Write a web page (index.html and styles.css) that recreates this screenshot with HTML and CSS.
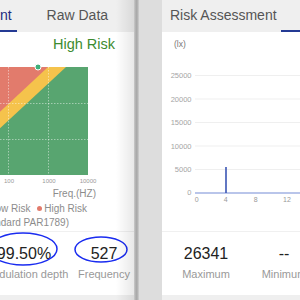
FILE: index.html
```html
<!DOCTYPE html>
<html lang="en">
<head>
    <meta charset="UTF-8">
    <meta name="viewport" content="width=device-width, initial-scale=1.0">
    <title>Flicker Report</title>
    <link rel="stylesheet" href="styles.css">
</head>
<body>
    <div class="screen">
        <section class="panel panel-left">
            <div class="page page-shifted">
                <div class="tabs">
                    <div class="tab active">Risk Assessment</div>
                    <div class="tab tab-raw">Raw Data</div>
                </div>
                <div class="page-body">
                    <div class="risk-level">High Risk</div>
                    <svg class="risk-chart" width="180" height="123" viewBox="0 -5 180 123">
                        <rect x="0" y="0" width="160" height="108" fill="#58a570"/>
                        <polygon points="0,0 138,0 21.6,108 0,108" fill="#f5c34c"/>
                        <polygon points="0,0 120,0 4.3,108 0,108" fill="#e27b6c"/>
                        <g stroke="rgba(255,255,255,0.45)" stroke-width="1" stroke-dasharray="1.5 1.5">
                            <line x1="40.5" y1="0" x2="40.5" y2="108"/>
                            <line x1="80.5" y1="0" x2="80.5" y2="108"/>
                            <line x1="120.5" y1="0" x2="120.5" y2="108"/>
                            <line x1="0" y1="36.5" x2="160" y2="36.5"/>
                            <line x1="0" y1="72.5" x2="160" y2="72.5"/>
                        </g>
                        <circle cx="110" cy="0" r="3" fill="#3fb07c" stroke="#fff" stroke-width="1"/>
                        <g class="tick" text-anchor="middle">
                            <text x="41" y="116">10</text>
                            <text x="81" y="116">100</text>
                            <text x="121" y="116">1000</text>
                            <text x="160" y="116">10000</text>
                        </g>
                    </svg>
                    <div class="axis-title">Freq.(HZ)</div>
                    <div class="legend">
                        <span class="dot dot-green"></span>No Risk
                        <span class="dot dot-yellow"></span>Low Risk
                        <span class="dot dot-red"></span>High Risk
                    </div>
                    <div class="standard">(IEEE Standard PAR1789)</div>
                    <div class="stats stats-left">
                        <div class="stat">
                            <div class="stat-value">99.50%</div>
                            <div class="stat-label">Modulation depth</div>
                        </div>
                        <div class="stat">
                            <div class="stat-value">527</div>
                            <div class="stat-label">Frequency</div>
                        </div>
                    </div>
                </div>
            </div>
            <!-- hand-drawn marks over the values -->
            <svg class="marks" width="134" height="300">
                <ellipse cx="23" cy="249" rx="34" ry="16" fill="none" stroke="#1a2cf0" stroke-width="1.5"/>
                <ellipse cx="101" cy="249.5" rx="26" ry="12.5" fill="none" stroke="#1a2cf0" stroke-width="1.5"/>
            </svg>
            <div class="edge-shade"></div>
        </section>

        <div class="divider"></div>

        <section class="panel panel-right">
            <div class="page">
                <div class="tabs">
                    <div class="tab tab-first">Risk Assessment</div>
                    <div class="tab active tab-next">Raw Data</div>
                </div>
                <div class="page-body">
                    <div class="unit">(lx)</div>
                    <svg class="lux-chart" width="200" height="150" viewBox="0 0 200 150">
                        <g stroke="#efefef" stroke-width="1">
                            <line x1="33" y1="15.5" x2="200" y2="15.5"/>
                            <line x1="33" y1="39" x2="200" y2="39"/>
                            <line x1="33" y1="62.5" x2="200" y2="62.5"/>
                            <line x1="33" y1="86" x2="200" y2="86"/>
                            <line x1="33" y1="109.5" x2="200" y2="109.5"/>
                        </g>
                        <line x1="33" y1="133" x2="200" y2="133" stroke="#b9c5ea" stroke-width="2"/>
                        <line x1="64" y1="107" x2="64" y2="133" stroke="#3a55b4" stroke-width="1.6"/>
                        <g class="tick tick-y" text-anchor="end">
                            <text x="29.5" y="17.7">25000</text>
                            <text x="29.5" y="41.7">20000</text>
                            <text x="29.5" y="64.7">15000</text>
                            <text x="29.5" y="88.7">10000</text>
                            <text x="29.5" y="111.7">5000</text>
                            <text x="29.5" y="134.7">0</text>
                        </g>
                        <g class="tick tick-x" text-anchor="middle">
                            <text x="34.7" y="141.5">0</text>
                            <text x="63.7" y="141.5">4</text>
                            <text x="93.7" y="141.5">8</text>
                            <text x="125" y="141.5">12</text>
                        </g>
                    </svg>
                    <div class="stats stats-right">
                        <div class="stat">
                            <div class="stat-value">26341</div>
                            <div class="stat-label">Maximum</div>
                        </div>
                        <div class="stat">
                            <div class="stat-value">--</div>
                            <div class="stat-label">Minimum</div>
                        </div>
                        <div class="stat">
                            <div class="stat-value">--</div>
                            <div class="stat-label">Average</div>
                        </div>
                    </div>
                </div>
            </div>
        </section>
    </div>
</body>
</html>
```

FILE: styles.css
```css
body {
    margin: 0;
    width: 300px;
    height: 300px;
    overflow: hidden;
    background: #dddddd;
    font-family: 'Liberation Sans', Arial, sans-serif;
    color: #222;
}

.screen {
    display: flex;
    width: 300px;
    height: 300px;
}

.panel {
    position: relative;
    height: 300px;
    overflow: hidden;
    background: #efefef;
    flex-shrink: 0;
}

.panel-left {
    width: 134px;
}

.panel-right {
    margin-left: 23px;
    flex: 1;
}

.page {
    width: 250px;
}

.page-shifted {
    margin-left: -100px;
}

/* Tab bar */
.tabs {
    display: flex;
    height: 32px;
    background: #efefef;
}

.tab {
    font-size: 14px;
    line-height: 30px;
    color: #555;
    white-space: nowrap;
    padding: 0 5px;
    border-bottom: 2px solid transparent;
}

.tab.active {
    border-bottom-color: #243a94;
}

.panel-left .tab.active {
    color: #1d2c80;
}

.tab-raw {
    margin-left: 25px;
}

.tab-first {
    padding: 0 4px 0 8px;
}

.tab-next {
    padding-left: 20px;
}

.page-body {
    height: 263px;
    background: #fff;
}

/* Left page */
.risk-level {
    width: 215px;
    text-align: right;
    font-size: 14.5px;
    line-height: 20px;
    padding-top: 2px;
    color: #3d8b2f;
}

.risk-chart {
    display: block;
    margin: 8px 0 0 28px;
    overflow: visible;
}

.tick {
    font-family: 'Liberation Sans', Arial, sans-serif;
    font-size: 6px;
    fill: #9a9a9a;
}

.axis-title,
.legend,
.standard {
    font-size: 10px;
    line-height: 14px;
    color: #8c8c8c;
    text-align: right;
    white-space: nowrap;
}

.axis-title {
    width: 196px;
    margin-top: 2px;
}

.legend {
    width: 187px;
    margin-top: 1px;
}

.standard {
    width: 169px;
}

.dot {
    display: inline-block;
    width: 5px;
    height: 5px;
    border-radius: 50%;
    margin: 0 2px 1px 4px;
    vertical-align: middle;
}

.dot-green {
    background: #58a570;
}

.dot-yellow {
    background: #f5c34c;
}

.dot-red {
    background: #e27b6c;
}

/* Value rows */
.stats {
    display: flex;
    border-top: 1px solid #f0f0f0;
    padding-top: 12px;
}

.stats-left {
    margin-top: 1px;
    padding-left: 84px;
}

.stats-right {
    margin-top: 21px;
    padding-left: 5px;
}

.stat {
    width: 80px;
    flex-shrink: 0;
    text-align: center;
    white-space: nowrap;
}

.stats-right .stat {
    width: 78px;
}

.stat-value {
    font-size: 16px;
    line-height: 20px;
    color: #222;
}

.stat-label {
    font-size: 11px;
    line-height: 14px;
    margin-top: 3px;
    color: #999;
}

/* Right page */
.unit {
    font-size: 8.5px;
    line-height: 12px;
    padding: 6px 0 0 12px;
    color: #777;
}

.lux-chart {
    display: block;
    margin-top: 10px;
}

.tick-y {
    font-size: 7.5px;
    fill: #a5a5a5;
}

.tick-x {
    font-size: 7px;
    fill: #999;
}

/* Overlays */
.marks {
    position: absolute;
    top: 0;
    left: 0;
    pointer-events: none;
}

.edge-shade {
    position: absolute;
    top: 0;
    right: 0;
    width: 18px;
    height: 300px;
    background: linear-gradient(to right, rgba(0, 0, 0, 0), rgba(0, 0, 0, 0.09));
}

.divider {
    width: 5px;
    flex-shrink: 0;
    background: linear-gradient(to right, #cacaca, #a8a8a8 45%, #b3b3b3 70%, #d0d0d0);
}
```
